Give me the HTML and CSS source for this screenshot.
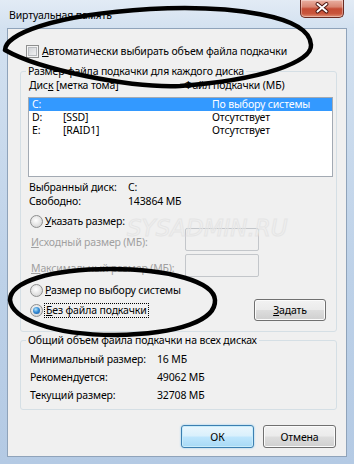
FILE: index.html
```html
<!DOCTYPE html>
<html lang="ru">
<head>
<meta charset="utf-8">
<title>Виртуальная память</title>
<link rel="stylesheet" href="styles.css">
</head>
<body>
<div class="window">
  <div class="titlebar">
    <span class="title">Виртуальная память</span>
    <div class="close">
      <svg width="44" height="18" viewBox="0 0 44 18">
        <path d="M17.5 5 L26.5 12.5 M26.5 5 L17.5 12.5" stroke="#4a1510" stroke-width="4" stroke-linecap="round" fill="none"/>
        <path d="M17.5 5 L26.5 12.5 M26.5 5 L17.5 12.5" stroke="#ffffff" stroke-width="2" stroke-linecap="round" fill="none"/>
      </svg>
    </div>
  </div>
  <div class="client">
    <div class="check-row"><span class="checkbox"></span><span><u>А</u>втоматически выбирать объем файла подкачки</span></div>

    <fieldset class="group g1">
      <legend>Размер файла подкачки для каждого диска</legend>
      <div class="list-head"><span class="lh1">Дис<u>к</u> [метка тома]</span><span>Файл подкачки (МБ)</span></div>
      <div class="listbox">
        <div class="lrow sel"><span class="lc1">C:</span><span class="lc2"></span><span>По выбору системы</span></div>
        <div class="lrow"><span class="lc1">D:</span><span class="lc2">[SSD]</span><span>Отсутствует</span></div>
        <div class="lrow"><span class="lc1">E:</span><span class="lc2">[RAID1]</span><span>Отсутствует</span></div>
      </div>
      <div class="info first"><span class="ik">Выбранный диск:</span><span>C:</span></div>
      <div class="info"><span class="ik">Свободно:</span><span>143864 МБ</span></div>
      <div class="radio-row r1"><span class="radio"></span><span><u>У</u>казать размер:</span></div>
      <div class="size-row"><span class="dis"><u>И</u>сходный размер (МБ):</span><span class="input"></span></div>
      <div class="size-row second"><span class="dis"><u>М</u>аксимальный размер (МБ):</span><span class="input"></span></div>
      <div class="radio-row r2"><span class="radio"></span><span><u>Р</u>азмер по выбору системы</span></div>
      <div class="last-row">
        <div class="radio-row"><span class="radio on"></span><span class="focus"><u>Б</u>ез файла подкачки</span></div>
        <button class="btn set"><u>З</u>адать</button>
      </div>
    </fieldset>

    <fieldset class="group g2">
      <legend>Общий объем файла подкачки на всех дисках</legend>
      <div class="trow"><span class="tk">Минимальный размер:</span><span>16 МБ</span></div>
      <div class="trow"><span class="tk">Рекомендуется:</span><span>49062 МБ</span></div>
      <div class="trow"><span class="tk">Текущий размер:</span><span>32708 МБ</span></div>
    </fieldset>

    <div class="buttons">
      <button class="btn default">ОК</button>
      <button class="btn">Отмена</button>
    </div>
  </div>

  <div class="watermark">SYSADMIN.RU</div>

  <svg class="marks" width="354" height="464" viewBox="0 0 354 464">
    <path d="M5 50 C5 35 50 15 150 9 C230 5 310 15 311 45 C312 62 262 80 180 86 C130 88 40 70 5 50" fill="none" stroke="#000" stroke-width="4.5" stroke-linecap="round"/>
    <path d="M10 300 C10 282 50 269 110 269 C170 269 214 282 215 300 C216 320 180 334 115 335 C50 335 12 318 10 300" fill="none" stroke="#000" stroke-width="4.5" stroke-linecap="round"/>
  </svg>
</div>
</body>
</html>
```

FILE: styles.css
```css
* { box-sizing: border-box; }

html, body {
  margin: 0;
  padding: 0;
}

body {
  width: 354px;
  height: 464px;
  overflow: hidden;
  font-family: "Noto Sans", "DejaVu Sans", sans-serif;
  font-size: 10.5px;
  letter-spacing: -0.15px;
  line-height: 14px;
  color: #000;
}

u {
  text-decoration: underline;
  text-decoration-thickness: 1px;
  text-underline-offset: 1px;
}

.window {
  position: relative;
  width: 354px;
  height: 464px;
  display: flex;
  flex-direction: column;
  background: linear-gradient(180deg, #e2ebf5 0px, #d3e1f0 28px, #bdd1e8 60%, #b4cae4 100%);
}

.titlebar {
  height: 28px;
  flex: none;
  display: flex;
  justify-content: space-between;
  align-items: flex-start;
}

.title {
  padding: 8px 0 0 9px;
  line-height: 14px;
}

.close {
  width: 44px;
  height: 18px;
  margin-right: 10px;
  border: 1px solid #6a2b22;
  border-top: none;
  border-radius: 0 0 5px 5px;
  background: linear-gradient(180deg, #eab0a2 0%, #d98672 40%, #c54c34 52%, #c9563c 80%, #e09177 100%);
  box-shadow: inset 0 0 0 1px rgba(255, 255, 255, 0.35);
  overflow: hidden;
}

.close svg { display: block; margin: -1px 0 0 -1px; }

.client {
  flex: 1;
  margin: 0 7px 7px 7px;
  background: #f0f0f0;
  border: 1px solid #8fa3ba;
  display: flex;
  flex-direction: column;
}

.check-row {
  display: flex;
  align-items: center;
  gap: 3px;
  height: 14px;
  margin: 15px 0 0 18px;
}

.checkbox {
  width: 13px;
  height: 13px;
  border: 1px solid #8e8f8f;
  background: linear-gradient(135deg, #c9ccd0 0%, #e6e7e9 60%, #f7f7f7 100%);
  box-shadow: inset 0 0 0 1px #f4f4f4, inset 0 0 0 2px #b9bcc0;
}

.group {
  margin: 0;
  min-width: 0;
  width: 317px;
  border: 1px solid #d5dfe5;
  border-radius: 3px;
  padding: 0;
}

.group legend {
  margin-left: 5px;
  padding: 0 2px;
  line-height: 14px;
}

.g1 {
  margin: 6px 0 0 12px;
  padding-bottom: 10px;
}

.list-head {
  display: flex;
  margin-left: 8px;
  height: 14px;
}

.lh1 { width: 155px; }

.listbox {
  margin: 5px 0 0 7px;
  width: 305px;
  height: 80px;
  border: 1px solid #a3aab3;
  background: #fff;
}

.lrow {
  display: flex;
  height: 13px;
  line-height: 13px;
  padding-left: 3px;
}

.lrow.sel {
  background: #3399ff;
  color: #fff;
}

.lc1 { width: 31px; }
.lc2 { width: 149px; }

.info {
  display: flex;
  margin-left: 8px;
  height: 14px;
}

.info.first { margin-top: 3px; }

.ik { width: 99px; }

.radio-row {
  display: flex;
  align-items: center;
  gap: 2px;
  height: 14px;
}

.r1 { margin: 6px 0 0 9px; }
.r2 { margin: 6px 0 0 9px; }

.radio {
  position: relative;
  flex: none;
  width: 13px;
  height: 13px;
  border-radius: 50%;
  border: 1px solid #8e8f8f;
  background: radial-gradient(circle at 45% 40%, #ffffff 0%, #e8e8e8 45%, #c9c9c9 100%);
}

.radio.on::after {
  content: "";
  position: absolute;
  left: 2px;
  top: 2px;
  width: 7px;
  height: 7px;
  border-radius: 50%;
  background: radial-gradient(circle at 40% 35%, #b6e6fb 0%, #3a8fd6 45%, #0c4f9c 100%);
}

.size-row {
  display: flex;
  height: 23px;
  margin-left: 10px;
}

.size-row.second { margin-top: 3px; }

.dis {
  width: 154px;
  padding-top: 7px;
  color: #a0a0a0;
  white-space: nowrap;
}

.input {
  width: 74px;
  height: 23px;
  border: 1px solid #c3c6ca;
  border-radius: 2px;
  background: #f0f0f0;
}

.last-row {
  display: flex;
  align-items: center;
  justify-content: space-between;
  height: 22px;
  margin: 2px 10px 0 9px;
}

.focus {
  outline: 1px dotted #000;
  outline-offset: 0;
  padding: 0 1px;
  line-height: 13px;
}

.btn {
  font-family: "Noto Sans", "DejaVu Sans", sans-serif;
  font-size: 10.5px;
  letter-spacing: -0.15px;
  line-height: 14px;
  color: #000;
  width: 73px;
  height: 23px;
  padding: 0;
  border: 1px solid #707070;
  border-radius: 3px;
  background: linear-gradient(180deg, #f2f2f2 0%, #ebebeb 48%, #dddddd 52%, #cfcfcf 100%);
  box-shadow: inset 0 0 0 1px #fbfbfb;
}

.btn.set {
  width: 72px;
  height: 22px;
}

.btn.default {
  border-color: #3c7fb1;
  background: linear-gradient(180deg, #eaf6fd 0%, #d9f0fc 48%, #bee6fd 52%, #a7d9f5 100%);
  box-shadow: inset 0 0 0 1px #c8ecfb, 0 0 2px #7fc5ee;
}

.g2 {
  margin: 1px 0 0 12px;
  padding: 3px 0 5px 0;
}

.trow {
  display: flex;
  height: 18px;
  line-height: 18px;
  margin-left: 9px;
}

.tk { width: 127px; }

.buttons {
  display: flex;
  justify-content: flex-end;
  gap: 9px;
  margin-top: 15px;
  padding-right: 10px;
}

.watermark {
  position: absolute;
  left: 127px;
  top: 214px;
  font-family: "DejaVu Sans", sans-serif;
  font-style: italic;
  font-size: 23px;
  letter-spacing: 0;
  line-height: 28px;
  color: rgba(0, 0, 0, 0);
  -webkit-text-stroke: 1px #e5e5e5;
  pointer-events: none;
}

.marks {
  position: absolute;
  left: 0;
  top: 0;
  pointer-events: none;
}
```
